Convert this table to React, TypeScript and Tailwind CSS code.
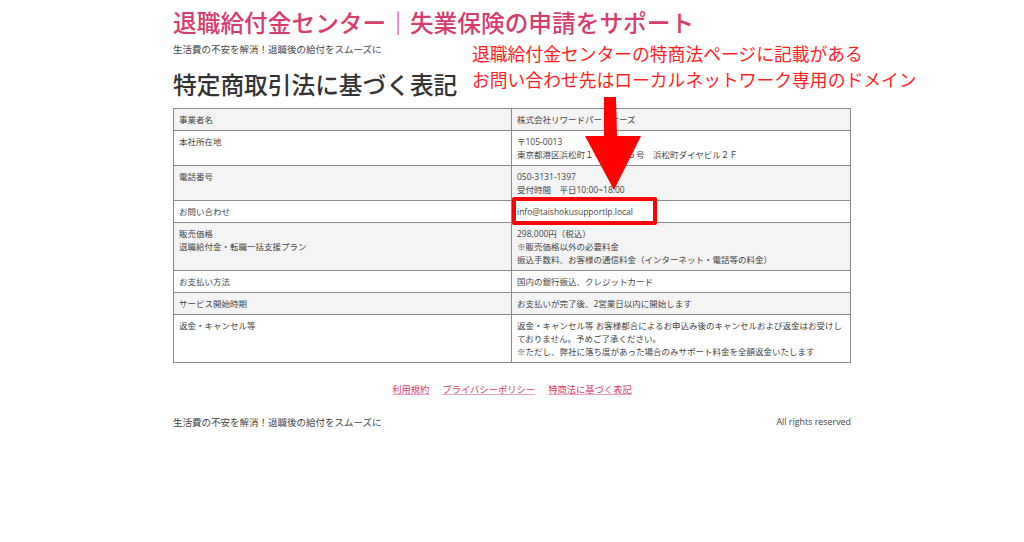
import React from "react";

const rows: { label: string[]; value: string[]; gray: boolean }[] = [
  { label: ["事業者名"], value: ["株式会社リワードパートナーズ"], gray: true },
  { label: ["本社所在地"], value: ["〒105-0013", "東京都港区浜松町１－１－１５号　浜松町ダイヤビル２Ｆ"], gray: false },
  { label: ["電話番号"], value: ["050-3131-1397", "受付時間　平日10:00~18:00"], gray: true },
  { label: ["お問い合わせ"], value: ["info@taishokusupportlp.local"], gray: false },
  {
    label: ["販売価格", "退職給付金・転職一括支援プラン"],
    value: ["298,000円（税込）", "※販売価格以外の必要料金", "振込手数料、お客様の通信料金（インターネット・電話等の料金）"],
    gray: true,
  },
  { label: ["お支払い方法"], value: ["国内の銀行振込、クレジットカード"], gray: false },
  { label: ["サービス開始時期"], value: ["お支払いが完了後、2営業日以内に開始します"], gray: true },
  {
    label: ["返金・キャンセル等"],
    value: [
      "返金・キャンセル等 お客様都合によるお申込み後のキャンセルおよび返金はお受けし",
      "ておりません。予めご了承ください。",
      "※ただし、弊社に落ち度があった場合のみサポート料金を全額返金いたします",
    ],
    gray: false,
  },
];

const font = { fontFamily: '"Noto Sans CJK JP", "Noto Sans", sans-serif' };
const tableFont = { fontFamily: '"Open Sans", "Noto Sans CJK JP", sans-serif' };

export default function App() {
  return (
    <div className="relative w-[1024px] h-[542px] bg-white overflow-hidden text-[#333]" style={font}>
      <div className="w-[678px] mx-auto pt-[6px]">
        <div className="text-[23.7px] leading-[32px] text-[#d63d6d] font-medium whitespace-nowrap">
          退職給付金センター｜失業保険の申請をサポート
        </div>
        <div className="mt-[4px] text-[9.5px] leading-[14px] text-[#444]">生活費の不安を解消！退職後の給付をスムーズに</div>
        <h1 className="mt-[11px] text-[23.7px] leading-[34px] text-[#333] font-medium whitespace-nowrap">
          特定商取引法に基づく表記
        </h1>
        <div className="mt-[7px] border border-[#8a8a8a]" style={tableFont}>
          {rows.map((r, i) => (
            <div
              key={i}
              className={`grid grid-cols-2 text-[8.5px] leading-[13px] text-[#444] ${i > 0 ? "border-t border-[#8a8a8a]" : ""} ${r.gray ? "bg-[#f4f4f4]" : "bg-white"}`}
            >
              <div className="px-[5px] py-[4px] border-r border-[#8a8a8a]">
                {r.label.map((l, j) => (
                  <div key={j} className="whitespace-nowrap">{l}</div>
                ))}
              </div>
              <div className="px-[5px] py-[4px]">
                {r.value.map((l, j) => (
                  <div key={j} className="whitespace-nowrap">{l}</div>
                ))}
              </div>
            </div>
          ))}
        </div>
        <div className="mt-[19px] flex justify-center gap-[13px] text-[9.3px] leading-[14px] text-[#d63d6d]">
          <span className="underline decoration-[#eda3bd]">利用規約</span>
          <span className="underline decoration-[#eda3bd]">プライバシーポリシー</span>
          <span className="underline decoration-[#eda3bd]">特商法に基づく表記</span>
        </div>
        <div className="mt-[19px] flex justify-between items-center text-[9.5px] leading-[14px] text-[#444]">
          <span>生活費の不安を解消！退職後の給付をスムーズに</span>
          <span className="text-[8.9px]" style={tableFont}>All rights reserved</span>
        </div>
      </div>

      {/* annotation */}
      <div className="absolute left-[472px] top-[40px] text-[17.8px] leading-[26px] text-[#ff1f1f] whitespace-nowrap">
        <div>退職給付金センターの特商法ページに記載がある</div>
        <div>お問い合わせ先はローカルネットワーク専用のドメイン</div>
      </div>
      <svg className="absolute left-0 top-0" width="1024" height="542" viewBox="0 0 1024 542">
        <polygon points="604,97 616,97 617,136 641,136 614,190 585,136 604,136" fill="#ff0000" />
      </svg>
      <div className="absolute left-[512px] top-[197px] w-[145px] h-[28px] border-[4px] border-[#ff0000] rounded-[2px]" />
    </div>
  );
}
